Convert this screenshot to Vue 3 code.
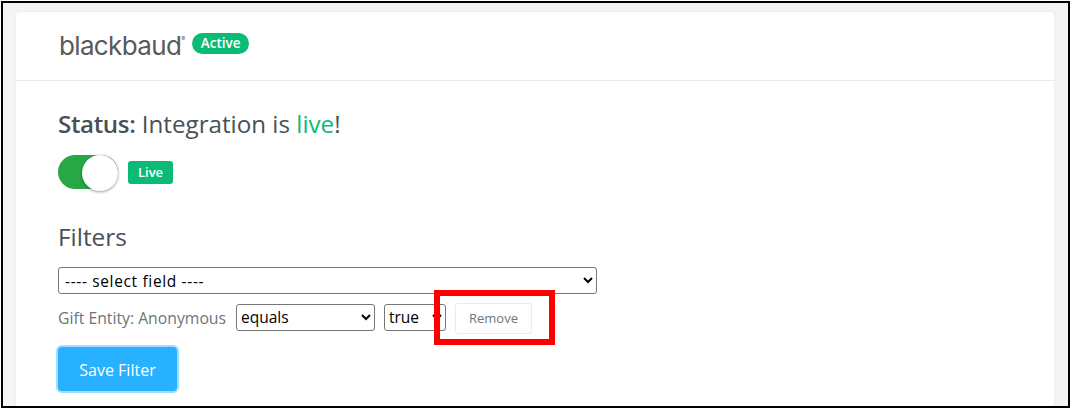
<script setup>
const fieldOptions = ['---- select field ----']
const operators = ['equals']
const values = ['true']
</script>

<template>
  <div class="frame">
    <div class="card">
      <header class="card-head">
        <span class="logo">blackbaud<sup class="reg">®</sup></span>
        <span class="pill">Active</span>
      </header>
      <main class="card-body">
        <h2 class="status"><b>Status:</b> Integration is <span class="live">live</span>!</h2>
        <div class="toggle-row">
          <span class="toggle"><span class="knob"></span></span>
          <span class="badge">Live</span>
        </div>
        <h3 class="filters">Filters</h3>
        <select class="field">
          <option v-for="o in fieldOptions" :key="o">{{ o }}</option>
        </select>
        <div class="rule">
          <span class="rule-label">Gift Entity: Anonymous</span>
          <select class="op"><option v-for="o in operators" :key="o">{{ o }}</option></select>
          <select class="val"><option v-for="o in values" :key="o">{{ o }}</option></select>
          <button class="remove" type="button">Remove</button>
        </div>
        <button class="save" type="button">Save Filter</button>
      </main>
    </div>
    <div class="callout"></div>
  </div>
</template>

<style>
html, body { margin: 0; background: #fff; }
</style>

<style scoped>
.frame {
  position: relative;
  box-sizing: border-box;
  width: 1069px;
  height: 407px;
  margin: 1px 0 0 1px;
  padding: 9px 14px 0 13px;
  border: 2px solid #000;
  background: #f4f4f4;
  overflow: hidden;
  font-family: "Open Sans", "Noto Sans", sans-serif;
  color: #495057;
}
.card {
  height: 420px;
  background: #fff;
  border-radius: 4px;
  box-shadow: 0 0 0 1px #efefef;
}
.card-head {
  box-sizing: border-box;
  height: 69px;
  padding: 0 0 0 43px;
  display: flex;
  align-items: center;
  gap: 7px;
  border-bottom: 1px solid #ebebeb;
}
.logo {
  font-family: Inter, "Open Sans", sans-serif;
  font-size: 26px;
  font-weight: 400;
  letter-spacing: -0.65px;
  color: #58595b;
  line-height: 30px;
  margin-top: -1px;
  white-space: nowrap;
}
.reg {
  font-size: 6px;
  vertical-align: 14px;
  line-height: 0;
  letter-spacing: 0;
}
.pill {
  display: inline-flex;
  align-items: center;
  justify-content: center;
  box-sizing: border-box;
  width: 57px;
  height: 21px;
  margin-top: -6px;
  border-radius: 11px;
  background: #0abb75;
  color: #fff;
  font-size: 13.5px;
  font-weight: 600;
}
.card-body {
  padding: 26px 0 0 42px;
}
.status {
  margin: 0;
  font-size: 24.2px;
  line-height: 34px;
  font-weight: 400;
  color: #495057;
  white-space: nowrap;
}
.status b { font-weight: 600; letter-spacing: -0.4px; }
.live { color: #0abb75; }
.toggle-row {
  display: flex;
  align-items: center;
  gap: 10px;
  margin-top: 13px;
  height: 36px;
}
.toggle {
  position: relative;
  display: block;
  width: 60px;
  height: 34px;
  border-radius: 17px;
  background: #28a745;
}
.knob {
  position: absolute;
  right: 0;
  top: 0;
  width: 36px;
  height: 36px;
  border-radius: 50%;
  background: #fff;
  box-shadow: 0 1px 3px rgba(0, 0, 0, 0.4);
}
.badge {
  display: inline-flex;
  align-items: center;
  justify-content: center;
  width: 45px;
  height: 23px;
  border-radius: 3px;
  background: #0abb75;
  color: #fff;
  font-size: 13px;
  font-weight: 600;
}
.filters {
  margin: 30px 0 0;
  font-size: 24.4px;
  line-height: 34px;
  font-weight: 400;
  color: #495057;
}
select {
  box-sizing: border-box;
  font-family: "Open Sans", sans-serif;
  font-size: 15.5px;
  color: #000;
  background: #fff;
  border: 1px solid #767676;
  border-radius: 3px;
  display: block;
}
.field {
  width: 539px;
  height: 27px;
  margin-top: 13px;
  padding-left: 2px;
  letter-spacing: 0.65px;
}
.rule {
  display: flex;
  align-items: center;
  height: 32px;
  margin-top: 8px;
}
.rule-label {
  width: 178px;
  font-size: 15.75px;
  color: #6c757d;
  white-space: nowrap;
}
.op { width: 139px; height: 27px; margin-bottom: 2px; }
.val { width: 62px; height: 27px; margin-left: 9px; margin-bottom: 2px; }
.remove {
  box-sizing: border-box;
  width: 77px;
  height: 31px;
  margin-left: 9px;
  background: #fff;
  border: 1px solid #e9ecef;
  border-radius: 3px;
  color: #6c757d;
  font-family: "Open Sans", sans-serif;
  font-size: 13px;
}
.save {
  display: block;
  box-sizing: border-box;
  width: 119px;
  height: 44px;
  margin-top: 13px;
  padding-top: 2px;
  background: #27b1ff;
  border: 0;
  box-shadow: 0 0 0 2px #9fdcff;
  border-radius: 4px;
  color: #fff;
  font-family: "Open Sans", sans-serif;
  font-size: 16px;
}
.callout {
  position: absolute;
  left: 431px;
  top: 287px;
  box-sizing: border-box;
  width: 121px;
  height: 55px;
  border: 6px solid #f00;
}
</style>
